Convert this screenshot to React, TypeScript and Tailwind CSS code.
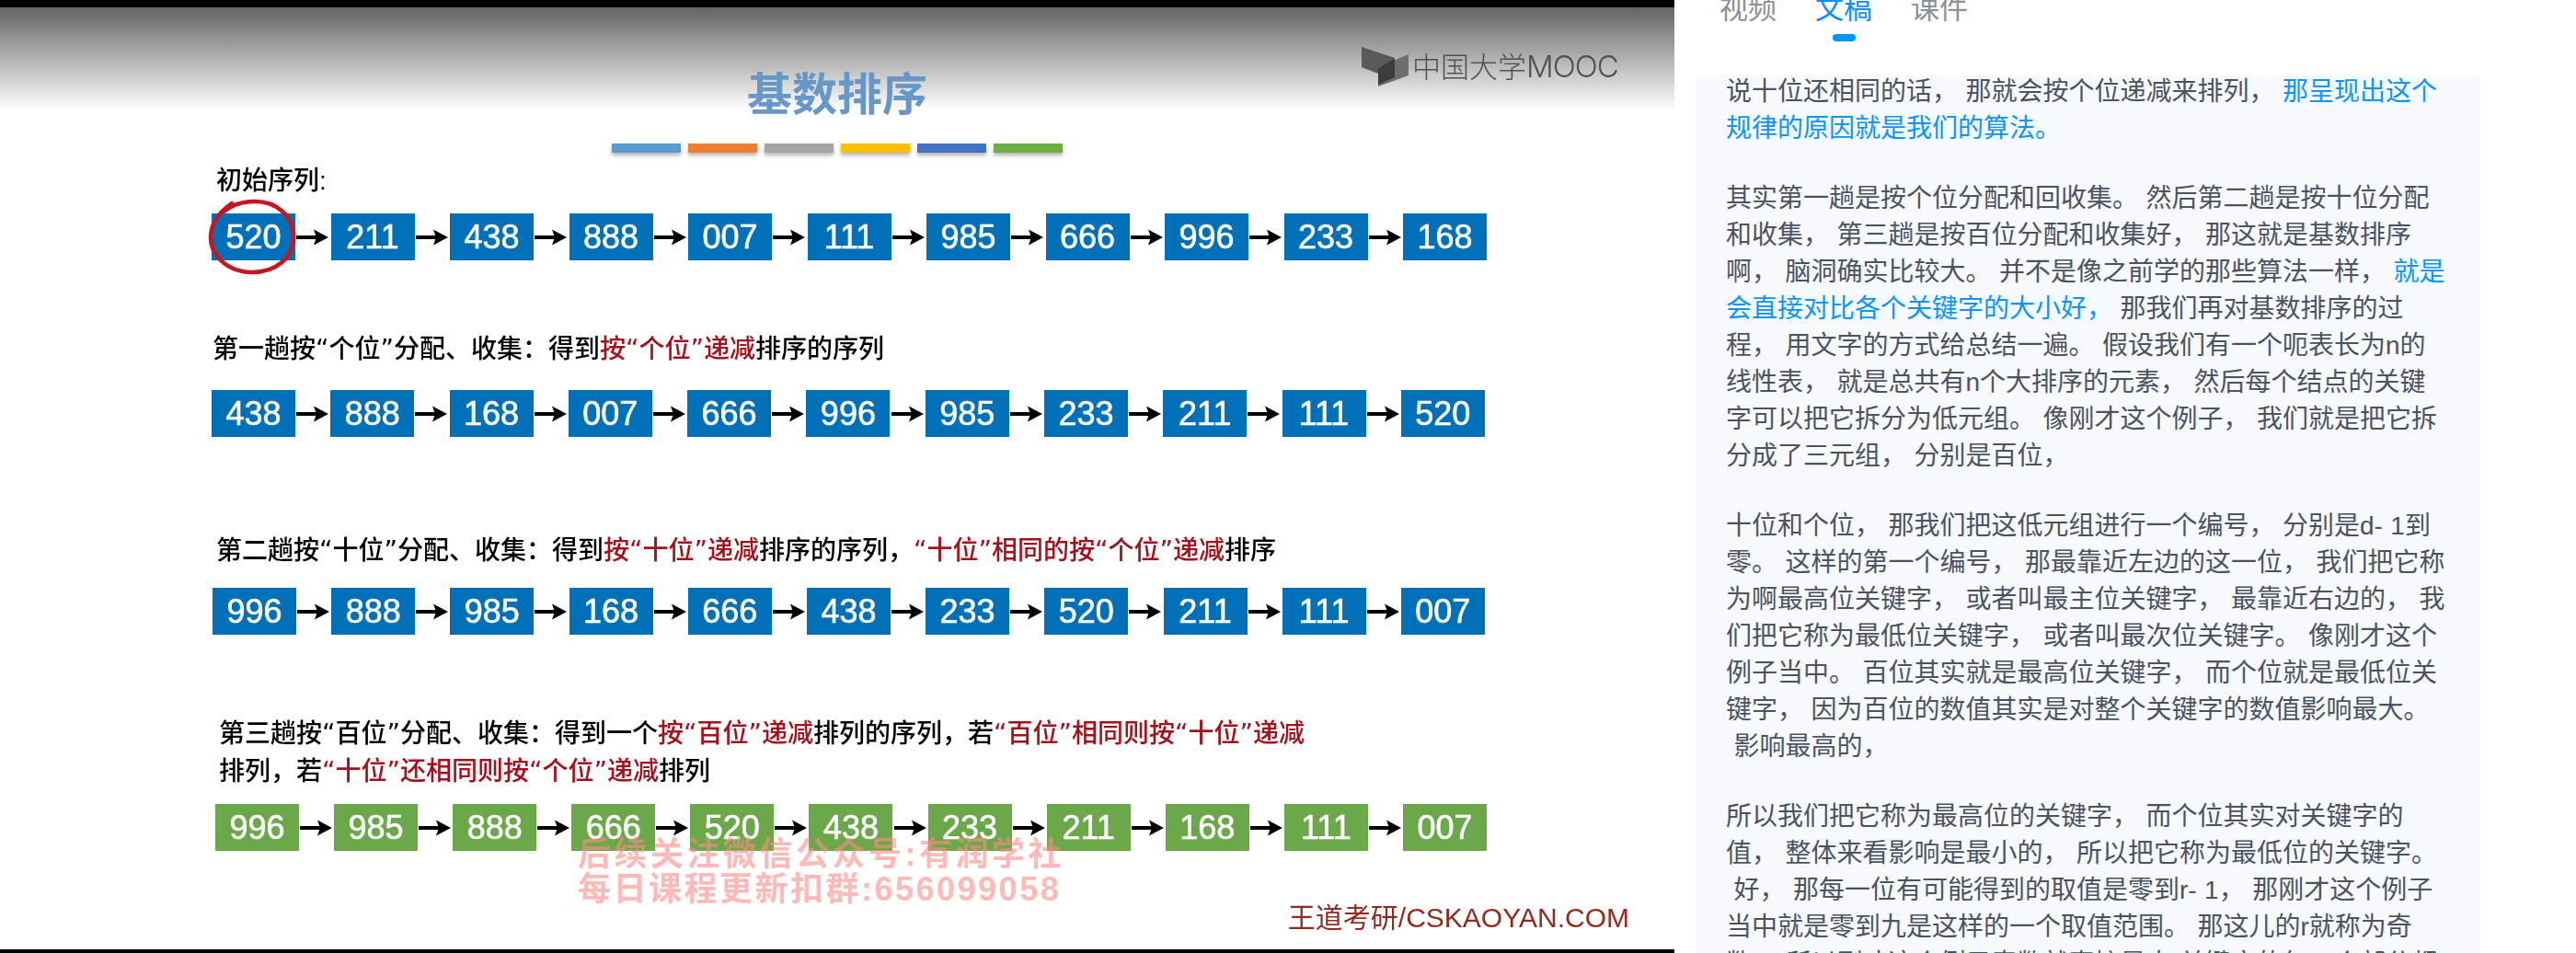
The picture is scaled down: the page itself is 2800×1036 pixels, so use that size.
import React from "react";

const BLUE = "bg-[#0071b8]";
const GREEN = "bg-[#6aa84a]";

const passOne = ["438", "888", "168", "007", "666", "996", "985", "233", "211", "111", "520"];
const passTwo = ["996", "888", "985", "168", "666", "438", "233", "520", "211", "111", "007"];
const passThree = ["996", "985", "888", "666", "520", "438", "233", "211", "168", "111", "007"];
const initial = ["520", "211", "438", "888", "007", "111", "985", "666", "996", "233", "168"];

const barColors = ["bg-[#5b9bd5]", "bg-[#ed7d31]", "bg-[#a5a5a5]", "bg-[#ffc000]", "bg-[#4472c4]", "bg-[#70ad47]"];

const Arrow = () => (
  <svg width="36" height="18" viewBox="0 0 36 18" className="shrink-0">
    <path d="M0 9H22" stroke="#000" strokeWidth="4" />
    <path d="M19 0.5L35 9L19 17.5L22 9Z" fill="#000" />
  </svg>
);

const Circle = () => (
  <svg width="100" height="88" viewBox="0 0 100 88" fill="none" className="absolute -left-[6px] -top-[18px]">
    <path
      d="M28 7C12 18 5 30 5 44C5 66 26 82 50 82C76 82 95 66 95 44C95 20 76 5 53 5C40 5 29 8 19 16"
      stroke="#c9151f"
      strokeWidth="4.5"
      strokeLinecap="round"
    />
  </svg>
);

function Chain({ items, color, className, circled }: { items: string[]; color: string; className: string; circled?: boolean }) {
  return (
    <div className={`flex items-center justify-between h-[51px] ${className}`}>
      {items.map((n, i) => (
        <React.Fragment key={i}>
          {i > 0 && <Arrow />}
          <div className={`relative flex items-center justify-center w-[91px] h-[51px] shrink-0 text-white text-[36px] [-webkit-text-stroke:0.6px_#fff] [font-family:'Liberation_Sans',sans-serif] ${color}`}>
            {n}
            {circled && i === 0 && <Circle />}
          </div>
        </React.Fragment>
      ))}
    </div>
  );
}

const Red = ({ children }: { children: React.ReactNode }) => <span className="text-[#a80f1a]">{children}</span>;

const headingFont = "[font-family:'DejaVu_Sans','Noto_Sans_CJK_SC',sans-serif]";

function Slide() {
  return (
    <div className="w-[1820px] h-[1036px] shrink-0 bg-black pt-[8px] pb-[4px] overflow-hidden">
      <div className="relative h-[1024px] flex flex-col overflow-hidden blur-[0.7px] bg-[linear-gradient(to_bottom,#646464_0px,#ffffff_112px)] text-black [font-family:'Liberation_Sans','Noto_Sans_CJK_SC',sans-serif]">
        {/* MOOC logo */}
        <div className="absolute left-[1480px] top-[42px] flex items-center text-[#505050]">
          <svg width="52" height="46" viewBox="0 0 52 46">
            <path d="M0 1L36 13V20L18 30L0 23Z" fill="#5a5a5a" />
            <path d="M18 23L51 9V32L18 44Z" fill="#6e6e6e" />
            <path d="M18 24L36 14V34L18 42Z" fill="#3c3c3c" />
          </svg>
          <span className="ml-[3px] text-[31px] leading-[34px] font-light whitespace-nowrap">
            中国大学<span className="text-[33px] [font-family:'Inter',sans-serif] font-light tracking-[-1px]">MOOC</span>
          </span>
        </div>

        <div className="mt-[71px] h-[48px] text-center text-[49px] leading-[48px] font-bold text-[#6797c6]">基数排序</div>

        <div className="mt-[29px] flex justify-center gap-[8px]">
          {barColors.map((c) => (
            <div key={c} className={`w-[75px] h-[10px] shadow-[0_3px_4px_rgba(0,0,0,0.3)] ${c}`} />
          ))}
        </div>

        <div className="mt-[17px] ml-[235px] h-[28px] text-[28px] leading-[28px] font-medium">初始序列:</div>
        <Chain items={initial} color={BLUE} className="mt-[21px] ml-[230px] w-[1386px]" circled />

        <div className={`mt-[83px] ml-[231px] h-[28px] text-[28px] leading-[28px] font-medium whitespace-nowrap ${headingFont}`}>
          第一趟按“个位”分配、收集：得到<Red>按“个位”递减</Red>排序的序列
        </div>
        <Chain items={passOne} color={BLUE} className="mt-[30px] ml-[230px] w-[1384px]" />

        <div className={`mt-[110px] ml-[235px] h-[28px] text-[28px] leading-[28px] font-medium whitespace-nowrap ${headingFont}`}>
          第二趟按“十位”分配、收集：得到<Red>按“十位”递减</Red>排序的序列，<Red>“十位”相同的按“个位”递减</Red>排序
        </div>
        <Chain items={passTwo} color={BLUE} className="mt-[26px] ml-[231px] w-[1383px]" />

        <div className={`mt-[87px] ml-[238px] text-[28px] leading-[41px] font-medium whitespace-nowrap ${headingFont}`}>
          <div>
            第三趟按“百位”分配、收集：得到一个<Red>按“百位”递减</Red>排列的序列，若<Red>“百位”相同则按“十位”递减</Red>
          </div>
          <div>
            排列，若<Red>“十位”还相同则按“个位”递减</Red>排列
          </div>
        </div>
        <Chain items={passThree} color={GREEN} className="mt-[15px] ml-[234px] w-[1382px]" />

        <div className="mt-[58px] pr-[49px] h-[30px] text-right text-[30px] leading-[30px] text-[#96291c] whitespace-nowrap">
          王道考研/CSKAOYAN.COM
        </div>

        {/* watermark */}
        <div className="absolute left-[628px] top-[902px] text-[36px] leading-[38px] font-bold text-[#ff8a85]/60 whitespace-nowrap">
          <div className="tracking-[3.5px]">后续关注微信公众号:有润学社</div>
          <div className="tracking-[2.5px]">每日课程更新扣群:656099058</div>
        </div>
      </div>
    </div>
  );
}

type Piece = string | { hl: string };

const paragraphs: Piece[][][] = [
  [
    ["说十位还相同的话， 那就会按个位递减来排列， ", { hl: "那呈现出这个" }],
    [{ hl: "规律的原因就是我们的算法。" }],
  ],
  [
    ["其实第一趟是按个位分配和回收集。 然后第二趟是按十位分配"],
    ["和收集， 第三趟是按百位分配和收集好， 那这就是基数排序"],
    ["啊， 脑洞确实比较大。 并不是像之前学的那些算法一样， ", { hl: "就是" }],
    [{ hl: "会直接对比各个关键字的大小好，" }, " 那我们再对基数排序的过"],
    ["程， 用文字的方式给总结一遍。 假设我们有一个呃表长为n的"],
    ["线性表， 就是总共有n个大排序的元素， 然后每个结点的关键"],
    ["字可以把它拆分为低元组。 像刚才这个例子， 我们就是把它拆"],
    ["分成了三元组， 分别是百位，"],
  ],
  [
    ["十位和个位， 那我们把这低元组进行一个编号， 分别是d- 1到"],
    ["零。 这样的第一个编号， 那最靠近左边的这一位， 我们把它称"],
    ["为啊最高位关键字， 或者叫最主位关键字， 最靠近右边的， 我"],
    ["们把它称为最低位关键字， 或者叫最次位关键字。 像刚才这个"],
    ["例子当中。 百位其实就是最高位关键字， 而个位就是最低位关"],
    ["键字， 因为百位的数值其实是对整个关键字的数值影响最大。"],
    [" 影响最高的，"],
  ],
  [
    ["所以我们把它称为最高位的关键字， 而个位其实对关键字的"],
    ["值， 整体来看影响是最小的， 所以把它称为最低位的关键字。"],
    [" 好， 那每一位有可能得到的取值是零到r- 1， 那刚才这个例子"],
    ["当中就是零到九是这样的一个取值范围。 那这儿的r就称为奇"],
    ["数。 所以刚才这个例子奇数就直接是十 关键字的每一个部分都"],
  ],
];

function Transcript() {
  return (
    <div className="flex-1 h-[1036px] bg-white relative overflow-hidden [font-family:'Liberation_Sans','Noto_Sans_CJK_SC',sans-serif]">
      <div className="flex gap-[42px] pl-[49px] -mt-[10px] h-[55px] text-[31px] leading-[40px] text-[#8b909c]">
        <div>视频</div>
        <div className="flex flex-col items-center text-[#0b8fff]">
          文稿
          <div className="mt-[7px] w-[25px] h-[8px] rounded-full bg-[#0094ff]" />
        </div>
        <div>课件</div>
      </div>
      <div className="mt-[37px] ml-[24px] w-[852px] h-[954px] bg-[#f7f9fd] overflow-hidden pl-[32px] text-[28px] leading-[40px] text-[#4a5364] [word-spacing:0.7px]">
        <div className="-mt-[2px]">
          {paragraphs.map((lines, p) => (
            <div key={p} className={p > 0 ? "mt-[36px]" : ""}>
              {lines.map((line, l) => (
                <div key={l} className="whitespace-pre">
                  {line.map((piece, k) =>
                    typeof piece === "string" ? (
                      <span key={k}>{piece}</span>
                    ) : (
                      <span key={k} className="text-[#0a94ff] bg-[#f4faff]">
                        {piece.hl}
                      </span>
                    )
                  )}
                </div>
              ))}
            </div>
          ))}
        </div>
      </div>
    </div>
  );
}

export default function App() {
  return (
    <div className="flex w-[2800px] h-[1036px] overflow-hidden bg-white">
      <Slide />
      <Transcript />
    </div>
  );
}
